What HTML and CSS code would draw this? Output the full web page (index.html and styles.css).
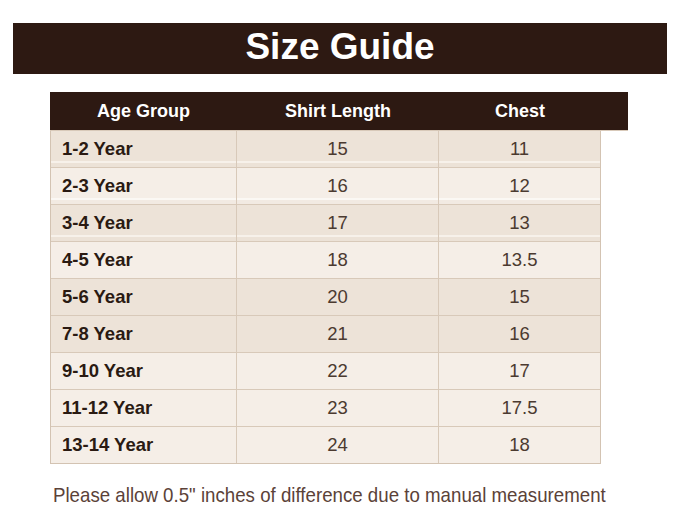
FILE: index.html
```html
<!DOCTYPE html>
<html>
<head>
<meta charset="utf-8">
<link rel="stylesheet" href="styles.css">
</head>
<body>
<div class="title-bar"><h1 class="title">Size Guide</h1></div>
<div class="table">
  <div class="head">
    <div class="hcell">Age Group</div>
    <div class="hcell">Shirt Length</div>
    <div class="hcell">Chest</div>
  </div>
  <div class="body">
    <div class="row dark strip"><div class="cell label">1-2 Year</div><div class="cell">15</div><div class="cell">11</div></div>
    <div class="row light strip-l"><div class="cell label">2-3 Year</div><div class="cell">16</div><div class="cell">12</div></div>
    <div class="row dark strip"><div class="cell label">3-4 Year</div><div class="cell">17</div><div class="cell">13</div></div>
    <div class="row light"><div class="cell label">4-5 Year</div><div class="cell">18</div><div class="cell">13.5</div></div>
    <div class="row dark"><div class="cell label">5-6 Year</div><div class="cell">20</div><div class="cell">15</div></div>
    <div class="row dark"><div class="cell label">7-8 Year</div><div class="cell">21</div><div class="cell">16</div></div>
    <div class="row light"><div class="cell label">9-10 Year</div><div class="cell">22</div><div class="cell">17</div></div>
    <div class="row light"><div class="cell label">11-12 Year</div><div class="cell">23</div><div class="cell">17.5</div></div>
    <div class="row light last"><div class="cell label">13-14 Year</div><div class="cell">24</div><div class="cell">18</div></div>
  </div>
</div>
<p class="note"><span class="note-text">Please allow 0.5" inches of difference due to manual measurement</span></p>
</body>
</html>
```
FILE: styles.css
```css
html, body {
  margin: 0;
  padding: 0;
  background: #ffffff;
  font-family: "Liberation Sans", Arial, sans-serif;
}
.title-bar {
  margin: 23px 15px 0 13px;
  height: 51px;
  background: #2d1912;
  display: flex;
  align-items: center;
  justify-content: center;
}
.title {
  margin: 0;
  color: #ffffff;
  font-size: 37px;
  font-weight: bold;
  line-height: 1;
  position: relative;
  top: -2px;
}
.table {
  margin: 18px 0 0 50px;
  width: 578px;
}
.head {
  height: 38px;
  background: #2d1912;
  display: grid;
  grid-template-columns: 187px 202px 162px;
  align-items: center;
  border-bottom: 1px solid #d8c9b9;
  width: 578px;
}
.hcell {
  color: #ffffff;
  font-weight: bold;
  font-size: 18px;
  text-align: center;
}
.body {
  width: 549px;
  border: 1px solid #d3c3b2;
  border-top: none;
}
.row {
  display: grid;
  grid-template-columns: 186px 202px 161px;
  height: 36px;
  border-bottom: 1px solid #d8c9b9;
}
.row.last { border-bottom: none; }
.row.dark { background: #ede3d8; }
.row.light { background: #f5eee7; }
.row.strip {
  background: linear-gradient(to bottom, #ede3d8 0, #ede3d8 30px, #f7f1ea 30px, #f7f1ea 32px, #ece2d7 32px);
}
.row.strip-l {
  background: linear-gradient(to bottom, #f5eee7 0, #f5eee7 30px, #fbf8f4 30px, #fbf8f4 32px, #f2eae2 32px);
}
.cell {
  display: flex;
  align-items: center;
  justify-content: center;
  font-size: 18.5px;
  color: #4b3a30;
  border-right: 1px solid #d8c9b9;
}
.cell:last-child { border-right: none; }
.cell.label {
  justify-content: flex-start;
  padding-left: 11px;
  font-weight: bold;
  color: #2a1a12;
}
.note {
  margin: 19px 0 0 53px;
  font-size: 21px;
  line-height: 24px;
  color: #5b4238;
}
.note-text {
  display: inline-block;
  white-space: nowrap;
  transform: scaleX(0.89);
  transform-origin: left center;
}
```
